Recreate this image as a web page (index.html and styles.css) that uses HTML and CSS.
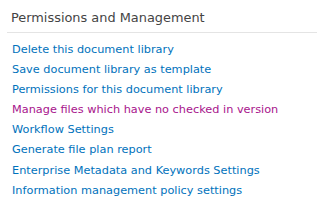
FILE: index.html
```html
<!DOCTYPE html>
<html>
<head>
<meta charset="utf-8">
<link rel="stylesheet" href="styles.css">
</head>
<body>
<div class="section">
  <h3 class="title">Permissions and Management</h3>
  <ul class="links">
    <li><a class="link" href="#">Delete this document library</a></li>
    <li><a class="link" href="#">Save document library as template</a></li>
    <li><a class="link" href="#">Permissions for this document library</a></li>
    <li><a class="link visited" href="#">Manage files which have no checked in version</a></li>
    <li><a class="link" href="#">Workflow Settings</a></li>
    <li><a class="link" href="#">Generate file plan report</a></li>
    <li><a class="link" href="#">Enterprise Metadata and Keywords Settings</a></li>
    <li><a class="link" href="#">Information management policy settings</a></li>
  </ul>
</div>
</body>
</html>
```
FILE: styles.css
```css
html, body {
  margin: 0;
  padding: 0;
  background: #ffffff;
}
body {
  font-family: "DejaVu Sans", Verdana, sans-serif;
}
.section {
  padding-top: 9px;
}
.title {
  margin: 0 0 0 7px;
  padding: 0 0 6px 4px;
  font-size: 12.9px;
  line-height: 17px;
  font-weight: normal;
  color: #444444;
  border-bottom: 1px solid #e4e4e4;
}
.links {
  list-style: none;
  margin: 0;
  padding: 7px 0 0 12px;
}
.links li {
  font-size: 11.3px;
  line-height: 20.1px;
}
.link {
  color: #0072bc;
  text-decoration: none;
}
.link.visited {
  color: #a8148c;
}
```
